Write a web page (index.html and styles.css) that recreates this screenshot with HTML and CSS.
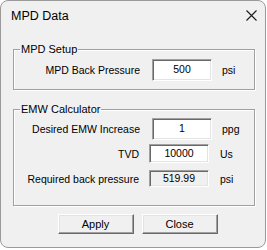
FILE: index.html
```html
<!DOCTYPE html>
<html lang="en">
<head>
    <meta charset="UTF-8">
    <title>MPD Data</title>
    <link rel="stylesheet" href="styles.css">
</head>
<body>
    <div class="window">
        <header class="title-bar">
            <span class="title">MPD Data</span>
            <button class="close-btn" aria-label="Close">
                <svg width="11" height="11" viewBox="0 0 11 11">
                    <path d="M0.5 0.5 L10.5 10.5 M10.5 0.5 L0.5 10.5" stroke="#1a1a1a" stroke-width="1.1" fill="none"/>
                </svg>
            </button>
        </header>

        <fieldset class="group group-setup">
            <legend>MPD Setup</legend>
            <div class="row row-back">
                <label class="field-label">MPD Back Pressure</label>
                <div class="field-box">500</div>
                <span class="unit">psi</span>
            </div>
        </fieldset>

        <fieldset class="group group-emw">
            <legend>EMW Calculator</legend>
            <div class="row row-emw">
                <label class="field-label">Desired EMW Increase</label>
                <div class="field-box">1</div>
                <span class="unit">ppg</span>
            </div>
            <div class="row row-tvd">
                <label class="field-label">TVD</label>
                <div class="field-box">10000</div>
                <span class="unit">Us</span>
            </div>
            <div class="row row-req">
                <label class="field-label">Required back pressure</label>
                <div class="field-box disabled">519.99</div>
                <span class="unit">psi</span>
            </div>
        </fieldset>

        <div class="actions">
            <button class="btn">Apply</button>
            <button class="btn">Close</button>
        </div>
    </div>
</body>
</html>
```

FILE: styles.css
```css
* {
    box-sizing: border-box;
}

body {
    margin: 0;
    background: #ffffff;
    font-family: "Liberation Sans", Arial, sans-serif;
    font-size: 10.5px;
    color: #000;
}

/* Window frame */
.window {
    width: 266px;
    height: 248px;
    background: #f0f0f0;
    border: 1px solid #9a9a9a;
    border-radius: 8px;
    display: flex;
    flex-direction: column;
}

.title-bar {
    height: 42px;
    display: flex;
    align-items: flex-start;
    justify-content: space-between;
    padding: 8px 8px 0 10px;
}

.title {
    font-size: 12.5px;
    line-height: 14px;
}

.close-btn {
    border: none;
    background: transparent;
    padding: 0;
    margin-top: 1px;
    width: 11px;
    height: 11px;
    display: flex;
}

/* Group boxes */
.group {
    margin: 0 10px 0 12px;
    padding: 0;
    border: 1px solid #a0a0a0;
    box-shadow: 1px 1px 0 #fff, inset 1px 1px 0 #fff;
    min-width: 0;
}

.group legend {
    margin-left: 6px;
    padding: 0 1px;
    line-height: 13px;
    font-size: 11px;
}

.group-setup {
    height: 47px;
    padding-top: 3px;
}

.group-emw {
    margin-top: 13px;
    height: 103px;
    padding-top: 2px;
}

.row {
    display: grid;
    grid-template-columns: 138px 60px auto;
    align-items: center;
    white-space: nowrap;
}

.field-label {
    text-align: right;
    padding-right: 12px;
}

.field-box {
    height: 22px;
    line-height: 18px;
    text-align: center;
    background: #fff;
    border: 1px solid;
    border-color: #a0a0a0 #fff #fff #a0a0a0;
    box-shadow: inset 1px 1px 0 #696969, inset -1px -1px 0 #e3e3e3;
}

.field-box.disabled {
    background: #f0f0f0;
}

.unit {
    padding-left: 10px;
}

.row-tvd,
.row-req {
    grid-template-columns: 135px 60px auto;
}

.row-tvd .field-label,
.row-req .field-label {
    padding-right: 10px;
}

.row-tvd .unit,
.row-req .unit {
    padding-left: 11px;
}

.row-tvd {
    margin-top: 4px;
}

.row-tvd .field-box {
    height: 19px;
    line-height: 16px;
}

.row-req {
    margin-top: 7px;
}

.row-req .field-box {
    height: 17px;
    line-height: 14px;
}

/* Buttons */
.actions {
    display: flex;
    justify-content: center;
    gap: 8px;
    margin-top: 8px;
    padding-left: 9px;
}

.btn {
    width: 76px;
    height: 20px;
    font-family: inherit;
    font-size: 11px;
    color: #000;
    background: #f0f0f0;
    border: 1px solid;
    border-color: #fff #696969 #696969 #fff;
    box-shadow: inset -1px -1px 0 #a0a0a0, inset 1px 1px 0 #e3e3e3;
    padding: 0;
}
```
